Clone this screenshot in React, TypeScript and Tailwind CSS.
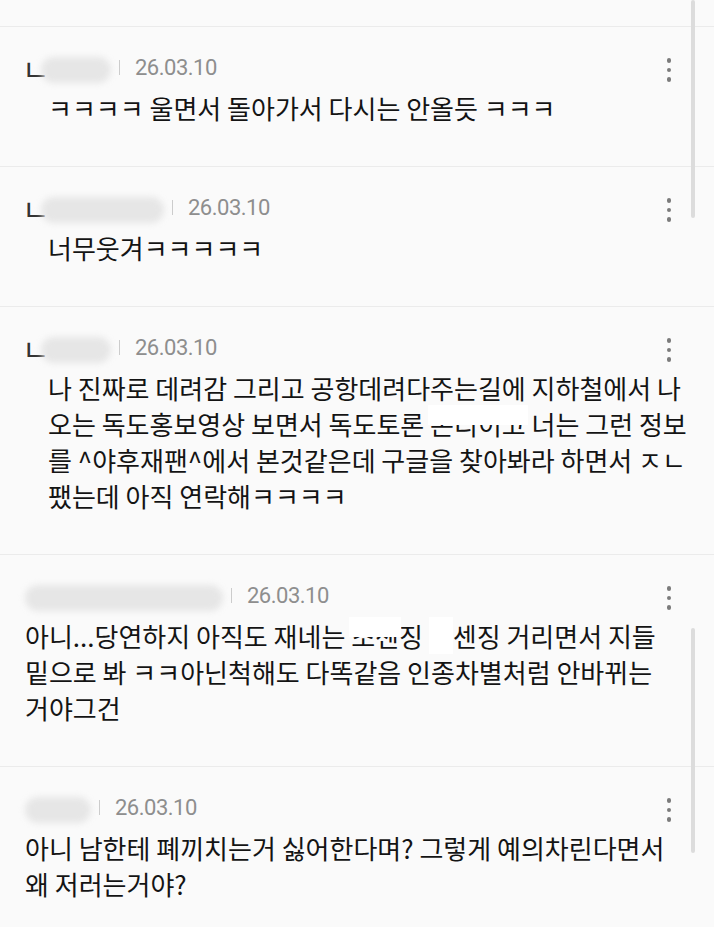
import { ReactNode } from "react";

type Comment = {
    reply: boolean;
    nameWidth: number;
    lines: ReactNode[];
};

// white patch over part of a word, like the censor marks in the capture
function Masked({ children, full }: { children: ReactNode; full?: boolean }) {
    return (
        <span className="relative">
            {children}
            <span className={full ? "absolute inset-x-0 top-0 h-full bg-white" : "absolute -inset-x-[2px] top-0 h-[20px] bg-white"} />
        </span>
    );
}

const comments: Comment[] = [
    {
        reply: true,
        nameWidth: 70,
        lines: ["ㅋㅋㅋㅋ 울면서 돌아가서 다시는 안올듯 ㅋㅋㅋ"],
    },
    {
        reply: true,
        nameWidth: 123,
        lines: ["너무웃겨ㅋㅋㅋㅋㅋ"],
    },
    {
        reply: true,
        nameWidth: 70,
        lines: [
            "나 진짜로 데려감 그리고 공항데려다주는길에 지하철에서 나",
            <>오는 독도홍보영상 보면서 독도토론 <Masked>논리이고</Masked> 너는 그런 정보</>,
            "를 ^야후재팬^에서 본것같은데 구글을 찾아봐라 하면서 ㅈㄴ",
            "팼는데 아직 연락해ㅋㅋㅋㅋ",
        ],
    },
    {
        reply: false,
        nameWidth: 198,
        lines: [
            <>아니...당연하지 아직도 재네는 <Masked>조센</Masked>징 <Masked full>조</Masked>센징 거리면서 지들</>,
            "밑으로 봐 ㅋㅋ아닌척해도 다똑같음 인종차별처럼 안바뀌는",
            "거야그건",
        ],
    },
    {
        reply: false,
        nameWidth: 66,
        lines: [
            "아니 남한테 폐끼치는거 싫어한다며? 그렇게 예의차린다면서",
            "왜 저러는거야?",
        ],
    },
];

function CommentItem({ comment }: { comment: Comment }) {
    return (
        <div className="border-t border-[#ebebeb] pt-[25px] pb-[40px] pl-[25px]">
            <div className="flex h-[30px] items-center justify-between pr-[43px]">
                <div className="flex items-center">
                    {comment.reply ? (
                        <span className="-ml-[3px] mt-[1px] w-[19px] text-[30px] leading-none text-[#333333]">ㄴ</span>
                    ) : null}
                    <div
                        className="mt-[5px] h-[26px] rounded-full bg-[#e6e6e6] blur-[3px]"
                        style={{ width: comment.nameWidth }}
                    />
                    <div className="ml-[8px] h-[15px] w-px bg-[#cccccc]" />
                    <span className="ml-[15px] font-['Roboto',sans-serif] text-[22px] tracking-[-0.5px] text-[#8e8e8e]">
                        26.03.10
                    </span>
                </div>
                <div className="mt-[6px] flex flex-col gap-[5px]">
                    <span className="h-[4.5px] w-[4.5px] rounded-full bg-[#7b7b7b]" />
                    <span className="h-[4.5px] w-[4.5px] rounded-full bg-[#7b7b7b]" />
                    <span className="h-[4.5px] w-[4.5px] rounded-full bg-[#7b7b7b]" />
                </div>
            </div>
            <div className={comment.reply ? "mt-[8px] pl-[23px]" : "mt-[8px]"}>
                {comment.lines.map((line, i) => (
                    <div key={i} className="whitespace-nowrap text-[26px] leading-[36px] text-[#141414]">
                        {line}
                    </div>
                ))}
            </div>
        </div>
    );
}

export default function App() {
    return (
        <main className="relative h-[927px] w-[714px] overflow-hidden bg-[#fafafa] font-['Noto_Sans_CJK_KR','Noto_Sans',sans-serif]">
            <div className="h-[26px]" />
            {comments.map((c, i) => (
                <CommentItem key={i} comment={c} />
            ))}
            {/* scroll indicators */}
            <div className="absolute top-0 left-[691px] h-[218px] w-[4px] rounded-full bg-[#dcdcdc]" />
            <div className="absolute top-[628px] left-[691px] h-[225px] w-[4px] rounded-full bg-[#dcdcdc]" />
        </main>
    );
}
